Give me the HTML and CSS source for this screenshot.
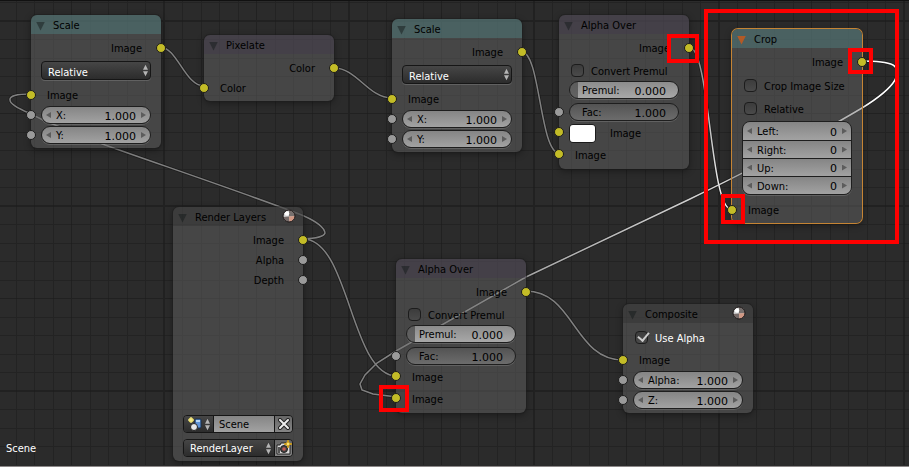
FILE: index.html
```html
<!DOCTYPE html>
<html lang="en">

<head>
    <meta charset="UTF-8">
    <meta name="viewport" content="width=device-width, initial-scale=1.0">
    <title>Node Editor</title>
    <link rel="stylesheet" href="styles.css">
</head>

<body>
    <!-- shared icons -->
    <svg class="defs" width="0" height="0" aria-hidden="true">
        <defs>
            <symbol id="updown" viewBox="0 0 6 14">
                <path d="M3 0 L6 6 H0 Z M0 8 H6 L3 14 Z" />
            </symbol>
            <symbol id="ball" viewBox="0 0 14 14">
                <circle cx="7" cy="7" r="6" fill="#d0d0d0" />
                <path d="M7 1 A6 6 0 0 1 13 7 L7 7.500 Z" fill="#77706e" />
                <path d="M1.200 8 L7 7.500 L7.500 13 A6 6 0 0 1 1.200 8 Z" fill="#756a68" />
                <path d="M7 7.500 L13 7 A6 6 0 0 1 7.500 13 Z" fill="#d09884" />
                <circle cx="5" cy="4.500" r="2.200" fill="#fff" />
                <circle cx="7" cy="7" r="6" fill="none" stroke="#1c1616" />
            </symbol>
        </defs>
    </svg>

    <main class="editor">
        <svg class="backdrop" aria-hidden="true">
            <defs>
                <pattern id="grid" x="71" y="113" width="185" height="185" patternUnits="userSpaceOnUse">
                    <path class="grid-line" d="M19 0V185M37 0V185M56 0V185M74 0V185M111 0V185M130 0V185M148 0V185M167 0V185M0 19H185M0 37H185M0 56H185M0 74H185M0 111H185M0 130H185M0 148H185M0 167H185" />
                    <path class="grid-line strong" d="M0 0V185M93 0V185M0 0H185M0 93H185" />
                </pattern>
                <linearGradient id="to-crop" gradientUnits="userSpaceOnUse" x1="689" y1="47" x2="731" y2="209">
                    <stop offset="0" stop-color="#808080" />
                    <stop offset="1" stop-color="#ffffff" />
                </linearGradient>
                <linearGradient id="from-crop" gradientUnits="userSpaceOnUse" x1="870" y1="80" x2="397" y2="397">
                    <stop offset="0" stop-color="#ffffff" />
                    <stop offset="1" stop-color="#808080" />
                </linearGradient>
            </defs>
            <rect width="100%" height="100%" fill="url(#grid)" />

            <g class="wire-edge">
                <path d="M160 47C177 47 185 86 204 86" />
                <path d="M334 68C357 68 368 98 392 98" />
                <path d="M522 52C540 52 540 153 559 153" />
                <path d="M689 47C710 47 710 209 731 209" />
                <path d="M861 61Q885 61 893 65Q900 69 895 80Q888 92 862 108C820 133 760 165 690 199L526 277L396 351L377 363L365 375L360 384L362 390L373 394L397 397" />
                <path d="M303 239Q324 238 325 233Q324 225 304 216C270 202 170 168 105 145L45 121L29 113Q10 105 10 100Q9 94 31 94" />
                <path d="M303 239C350 239 350 376 397 376" />
                <path d="M526 291C574 291 574 360 623 360" />
            </g>
            <g class="wire">
                <path d="M160 47C177 47 185 86 204 86" />
                <path d="M334 68C357 68 368 98 392 98" />
                <path d="M522 52C540 52 540 153 559 153" />
                <path class="to-crop" d="M689 47C710 47 710 209 731 209" />
                <path class="from-crop" d="M861 61Q885 61 893 65Q900 69 895 80Q888 92 862 108C820 133 760 165 690 199L526 277L396 351L377 363L365 375L360 384L362 390L373 394L397 397" />
                <path d="M303 239Q324 238 325 233Q324 225 304 216C270 202 170 168 105 145L45 121L29 113Q10 105 10 100Q9 94 31 94" />
                <path d="M303 239C350 239 350 376 397 376" />
                <path d="M526 291C574 291 574 360 623 360" />
            </g>
        </svg>

        <section class="node scale-a">
            <header class="distort"><button class="fold" aria-label="Collapse"></button><h2>Scale</h2></header>
            <div class="body">
                <div class="row out">Image<i class="socket color"></i></div>
                <div class="picker">
                    <select aria-label="Space"><option>Relative</option></select>
                    <svg class="arrows"><use href="#updown" /></svg>
                </div>
                <div class="row in"><i class="socket color"></i>Image</div>
                <div class="number"><i class="socket"></i><button class="dec" aria-label="Decrease"></button><label for="ax">X:</label><input type="text" id="ax" value="1.000"><button class="inc" aria-label="Increase"></button></div>
                <div class="number"><i class="socket"></i><button class="dec" aria-label="Decrease"></button><label for="ay">Y:</label><input type="text" id="ay" value="1.000"><button class="inc" aria-label="Increase"></button></div>
            </div>
        </section>

        <section class="node pixelate">
            <header class="filter"><button class="fold" aria-label="Collapse"></button><h2>Pixelate</h2></header>
            <div class="body">
                <div class="row out">Color<i class="socket color"></i></div>
                <div class="row in"><i class="socket color"></i>Color</div>
            </div>
        </section>

        <section class="node scale-b">
            <header class="distort"><button class="fold" aria-label="Collapse"></button><h2>Scale</h2></header>
            <div class="body">
                <div class="row out">Image<i class="socket color"></i></div>
                <div class="picker">
                    <select aria-label="Space"><option>Relative</option></select>
                    <svg class="arrows"><use href="#updown" /></svg>
                </div>
                <div class="row in"><i class="socket color"></i>Image</div>
                <div class="number"><i class="socket"></i><button class="dec" aria-label="Decrease"></button><label for="bx">X:</label><input type="text" id="bx" value="1.000"><button class="inc" aria-label="Increase"></button></div>
                <div class="number"><i class="socket"></i><button class="dec" aria-label="Decrease"></button><label for="by">Y:</label><input type="text" id="by" value="1.000"><button class="inc" aria-label="Increase"></button></div>
            </div>
        </section>

        <section class="node alpha-a">
            <header class="filter"><button class="fold" aria-label="Collapse"></button><h2>Alpha Over</h2></header>
            <div class="body">
                <div class="row out">Image<i class="socket color"></i></div>
                <label class="check spaced"><input type="checkbox">Convert Premul</label>
                <div class="number slider"><label for="ap">Premul:</label><input type="text" id="ap" value="0.000"></div>
                <div class="number slider full"><i class="socket"></i><label for="af">Fac:</label><input type="text" id="af" value="1.000"></div>
                <div class="row in tall"><i class="socket color"></i><input type="color" id="ac" value="#ffffff"><label for="ac">Image</label></div>
                <div class="row in tall"><i class="socket color"></i>Image</div>
            </div>
        </section>

        <section class="node crop selected">
            <header class="distort"><button class="fold" aria-label="Collapse"></button><h2>Crop</h2></header>
            <div class="body">
                <div class="row out">Image<i class="socket color"></i></div>
                <label class="check wide"><input type="checkbox">Crop Image Size</label>
                <label class="check wide"><input type="checkbox">Relative</label>
                <div class="stack">
                    <div class="number"><button class="dec" aria-label="Decrease"></button><label for="cl">Left:</label><input type="text" id="cl" value="0"><button class="inc" aria-label="Increase"></button></div>
                    <div class="number"><button class="dec" aria-label="Decrease"></button><label for="cr">Right:</label><input type="text" id="cr" value="0"><button class="inc" aria-label="Increase"></button></div>
                    <div class="number"><button class="dec" aria-label="Decrease"></button><label for="cu">Up:</label><input type="text" id="cu" value="0"><button class="inc" aria-label="Increase"></button></div>
                    <div class="number"><button class="dec" aria-label="Decrease"></button><label for="cd">Down:</label><input type="text" id="cd" value="0"><button class="inc" aria-label="Increase"></button></div>
                </div>
                <div class="row in"><i class="socket color"></i>Image</div>
            </div>
        </section>

        <section class="node layers">
            <header class="plain"><button class="fold" aria-label="Collapse"></button><h2>Render Layers</h2><svg class="ball"><use href="#ball" /></svg></header>
            <div class="body">
                <div class="row out">Image<i class="socket color"></i></div>
                <div class="row out">Alpha<i class="socket"></i></div>
                <div class="row out">Depth<i class="socket"></i></div>
                <div class="preview"></div>
                <div class="group">
                    <button class="browse" aria-label="Browse scenes">
                        <svg class="scene-icon" viewBox="0 0 14 14">
                            <rect x="7" y="2" width="6" height="9" rx="1" fill="#5f94d8" stroke="#18304f" />
                            <path d="M8 3h4v2H8z" fill="#b6d4f5" />
                            <circle cx="3" cy="3" r="2.500" fill="#d8cf58" />
                            <path d="M3 0v6M0 3h6" stroke="#fff29a" />
                            <circle cx="6" cy="10" r="3.500" fill="#e6e6e6" stroke="#222" />
                        </svg>
                        <svg class="arrows"><use href="#updown" /></svg>
                    </button>
                    <input type="text" class="name" aria-label="Scene" value="Scene">
                    <button class="square" aria-label="Unlink">
                        <svg width="12" height="12" viewBox="0 0 12 12">
                            <path d="M2 2L10 10M10 2L2 10" stroke="#222" stroke-width="4" stroke-linecap="round" />
                            <path d="M2 2L10 10M10 2L2 10" stroke="#eee" stroke-width="2" stroke-linecap="round" />
                        </svg>
                    </button>
                </div>
                <div class="group last">
                    <div class="picker">
                        <select aria-label="Layer"><option>RenderLayer</option></select>
                        <svg class="arrows"><use href="#updown" /></svg>
                    </div>
                    <button class="square" aria-label="Render layer">
                        <svg width="16" height="16" viewBox="0 0 16 16">
                            <path d="M1 5h3l1-2h5l1 2h3v9H1z" fill="#ddd" stroke="#222" />
                            <path d="M2 7h2v6H2z" fill="#555" />
                            <circle cx="8" cy="9" r="3.500" fill="#444" stroke="#222" />
                            <circle cx="8" cy="9" r="1.800" fill="#c05a55" />
                            <path d="M12 0l1 3 3 1-3 1-1 3-1-3-3-1 3-1z" fill="#ffe56b" stroke="#c99a1c" />
                        </svg>
                    </button>
                </div>
            </div>
        </section>

        <section class="node alpha-b">
            <header class="filter"><button class="fold" aria-label="Collapse"></button><h2>Alpha Over</h2></header>
            <div class="body">
                <div class="row out">Image<i class="socket color"></i></div>
                <label class="check spaced"><input type="checkbox">Convert Premul</label>
                <div class="number slider"><label for="bp">Premul:</label><input type="text" id="bp" value="0.000"></div>
                <div class="number slider full"><i class="socket"></i><label for="bf">Fac:</label><input type="text" id="bf" value="1.000"></div>
                <div class="row in tall"><i class="socket color"></i>Image</div>
                <div class="row in tall"><i class="socket color"></i>Image</div>
            </div>
        </section>

        <section class="node composite">
            <header class="plain"><button class="fold" aria-label="Collapse"></button><h2>Composite</h2><svg class="ball"><use href="#ball" /></svg></header>
            <div class="body">
                <label class="check on"><input type="checkbox" checked>Use Alpha</label>
                <div class="row in"><i class="socket color"></i>Image</div>
                <div class="number"><i class="socket"></i><button class="dec" aria-label="Decrease"></button><label for="oa">Alpha:</label><input type="text" id="oa" value="1.000"><button class="inc" aria-label="Increase"></button></div>
                <div class="number"><i class="socket"></i><button class="dec" aria-label="Decrease"></button><label for="oz">Z:</label><input type="text" id="oz" value="1.000"><button class="inc" aria-label="Increase"></button></div>
            </div>
        </section>

        <!-- red highlights -->
        <div class="mark mark-node"></div>
        <div class="mark mark-alpha-out"></div>
        <div class="mark mark-crop-out"></div>
        <div class="mark mark-crop-in"></div>
        <div class="mark mark-alpha-in"></div>

        <p class="scene-name">Scene</p>
    </main>
</body>

</html>
```
FILE: styles.css
```css
* {
    box-sizing: border-box;
}

body {
    margin: 0;
    background-color: #2b2b2b;
    color: #000;
    font-family: "DejaVu Sans Condensed", "DejaVu Sans", sans-serif;
    font-size: 11px;
    line-height: 18px;
}

button,
input,
select {
    margin: 0;
    padding: 0;
    border: none;
    background: none;
    color: inherit;
    font: inherit;
    appearance: none;
}

.defs {
    position: absolute;
}

.editor {
    position: relative;
    display: flex;
    align-items: flex-end;
    min-height: 100vh;
    overflow: hidden;
    border-top: 1px solid #111;
    border-bottom: 1px solid #8c8888;
}

.backdrop {
    position: absolute;
    top: -1px;
    left: 0;
    width: 100%;
    height: 100%;
}

/* 1px lines sit on whole pixels */
.grid-line {
    fill: none;
    stroke: #232323;
    stroke-width: 1px;
    shape-rendering: crispEdges;
}

.grid-line.strong {
    stroke: #1c1c1c;
    stroke-width: 2px;
    stroke-opacity: 0.7;
}

.wire,
.wire-edge {
    fill: none;
    stroke: #808080;
    stroke-width: 1.5px;
}

.wire-edge {
    stroke: #161616;
    stroke-width: 3px;
    opacity: 0.7;
}

.to-crop {
    stroke: url(#to-crop);
}

.from-crop {
    stroke: url(#from-crop);
}

/* nodes */
.node {
    position: absolute;
    width: 130px;
    border-radius: 6px;
    background-color: rgba(105, 105, 105, 0.45);
    box-shadow: 0 0 0 1px rgba(30, 30, 30, 0.5), 0 2px 7px rgba(0, 0, 0, 0.4);
}

.node.selected {
    box-shadow: 0 0 0 1px #c58434, 0 2px 7px rgba(0, 0, 0, 0.4);
}

.scale-a { left: 31px; top: 14px; }
.pixelate { left: 204px; top: 34px; }
.scale-b { left: 392px; top: 18px; }
.alpha-a { left: 559px; top: 14px; }
.crop { left: 732px; top: 28px; }
.layers { left: 173px; top: 206px; }
.alpha-b { left: 396px; top: 258px; }
.composite { left: 623px; top: 303px; }

header {
    display: flex;
    align-items: center;
    height: 19px;
    padding: 3px 7px 0 5px;
    border-radius: 6px 6px 0 0;
}

header h2 {
    flex: 1;
    margin: 0 0 0 8px;
    font-size: 11px;
    font-weight: normal;
    line-height: 16px;
}

.distort {
    background-color: rgba(80, 130, 130, 0.45);
}

.filter {
    background-color: rgba(66, 56, 76, 0.4);
}

.plain {
    background-color: rgba(45, 45, 45, 0.4);
}

.fold {
    width: 9px;
    height: 9px;
    background-color: rgba(20, 25, 25, 0.5);
    clip-path: polygon(0 0, 100% 0, 50% 100%);
}

.selected .fold {
    background-color: #b35a26;
}

.ball {
    width: 14px;
    height: 14px;
    margin-bottom: 4px;
}

.body {
    display: flex;
    flex-direction: column;
    gap: 2px;
    padding: 5px 10px 4px;
}

.row {
    position: relative;
    display: flex;
    align-items: center;
    height: 18px;
    padding-top: 2px;
}

.row.tall {
    height: 20px;
}

.out {
    justify-content: flex-end;
    padding-right: 9px;
}

.in {
    padding-left: 6px;
}

.socket {
    position: absolute;
    left: -15px;
    top: 4px;
    width: 10px;
    height: 10px;
    border: 1px solid #1c1c1c;
    border-radius: 50%;
    background-color: #9a9a9a;
}

.socket.color {
    background-color: #c3bc27;
}

.out .socket {
    left: auto;
    right: -15px;
}

.number > .socket {
    left: -16px;
    top: 3px;
}

/* fields */
.number {
    position: relative;
    display: flex;
    align-items: center;
    height: 18px;
    padding: 0 4px;
    border: 1px solid #1e1e1e;
    border-radius: 9px;
    background: linear-gradient(#858585, #a2a2a2);
    box-shadow: 0 1px 0 rgba(255, 255, 255, 0.15);
}

.number label {
    margin-left: 5px;
    padding-top: 2px;
    line-height: 16px;
}

.number input {
    flex: 1;
    width: 0;
    height: 18px;
    margin-right: 5px;
    padding-top: 2px;
    font-family: "DejaVu Sans", sans-serif;
    line-height: 16px;
    text-align: right;
}

.dec,
.inc {
    width: 5px;
    height: 6px;
    background-color: #5c5c5c;
    clip-path: polygon(0 50%, 100% 0, 100% 100%);
}

.inc {
    clip-path: polygon(0 0, 100% 50%, 0 100%);
}

.slider {
    padding: 0 7px;
    background: linear-gradient(to right, rgba(80, 80, 80, 0.8) 8px, transparent 8px), linear-gradient(#8c8c8c, #a8a8a8);
}

.slider.full {
    margin-top: 2px;
    background: linear-gradient(#535353, #6c6c6c);
}

.stack {
    margin-top: 2px;
    margin-bottom: 4px;
    overflow: hidden;
    border: 1px solid #1e1e1e;
    border-radius: 8px;
    box-shadow: 0 1px 0 rgba(255, 255, 255, 0.15);
}

.stack .number {
    border: none;
    border-radius: 0;
}

.stack .number + .number {
    border-top: 1px solid #1e1e1e;
}

.picker {
    position: relative;
    display: flex;
    margin: 2px 0 4px;
}

.picker select {
    flex: 1;
    width: 0;
    height: 19px;
    padding: 2px 6px 0;
    border: 1px solid #161616;
    border-radius: 4px;
    background: linear-gradient(#464646, #2c2c2c);
    box-shadow: 0 1px 0 rgba(255, 255, 255, 0.15);
    color: #fff;
}

.arrows {
    width: 5px;
    height: 13px;
    fill: #b5b5b5;
}

.picker .arrows {
    position: absolute;
    right: 3px;
    top: 3px;
    pointer-events: none;
}

.check {
    display: flex;
    align-items: center;
    gap: 7px;
    height: 18px;
    padding: 3px 0 0 2px;
}

.check.spaced {
    margin-top: 2px;
}

.check.wide {
    margin-top: 3px;
}

.check.on {
    margin-bottom: 3px;
    color: #fff;
}

.check input {
    width: 13px;
    height: 13px;
    margin-bottom: 3px;
    border: 1px solid #1c1c1c;
    border-radius: 4px;
    background: linear-gradient(#3c3c3c, #4a4a4a);
}

.check input:checked::before {
    content: "";
    display: block;
    width: 5px;
    height: 9px;
    margin: -2px 0 0 4px;
    border: solid #ccc;
    border-width: 0 2px 2px 0;
    transform: rotate(40deg);
}

input[type="color"] {
    width: 27px;
    height: 19px;
    margin: 0 14px 2px -6px;
    border: 1px solid #1c1c1c;
    border-radius: 4px;
    background-color: #fff;
    overflow: hidden;
}

input[type="color"]::-webkit-color-swatch-wrapper {
    padding: 0;
}

input[type="color"]::-webkit-color-swatch {
    border: none;
}

/* render layers */
.preview {
    height: 122px;
}

.group {
    display: flex;
    height: 18px;
    overflow: hidden;
    border: 1px solid #161616;
    border-radius: 4px;
}

.group.last {
    margin-top: 4px;
}

.browse {
    display: flex;
    align-items: center;
    gap: 3px;
    width: 29px;
    padding: 0 3px 0 4px;
    background: linear-gradient(#464646, #2c2c2c);
}

.scene-icon {
    width: 14px;
    height: 14px;
}

.name {
    flex: 1;
    width: 0;
    padding: 2px 0 0 5px;
    border-left: 1px solid #161616;
    background: linear-gradient(#858585, #a2a2a2);
}

.square {
    display: flex;
    align-items: center;
    justify-content: center;
    width: 18px;
    border-left: 1px solid #161616;
    background: linear-gradient(#666, #858585);
}

.group .picker {
    flex: 1;
    margin: 0;
}

.group .picker select {
    height: 16px;
    padding-top: 0;
    border: none;
    border-radius: 0;
}

.group .picker .arrows {
    top: 2px;
}

/* highlights */
.mark {
    position: absolute;
    border: 4px solid #f00;
}

.mark-node { left: 704px; top: 8px; width: 195px; height: 235px; }
.mark-alpha-out { left: 667px; top: 33px; width: 32px; height: 29px; }
.mark-crop-out { left: 848px; top: 47px; width: 25px; height: 26px; }
.mark-crop-in { left: 721px; top: 193px; width: 24px; height: 30px; }
.mark-alpha-in { left: 379px; top: 384px; width: 30px; height: 27px; }

.scene-name {
    position: relative;
    margin: 0 0 8px 6px;
    color: #fff;
}
```
